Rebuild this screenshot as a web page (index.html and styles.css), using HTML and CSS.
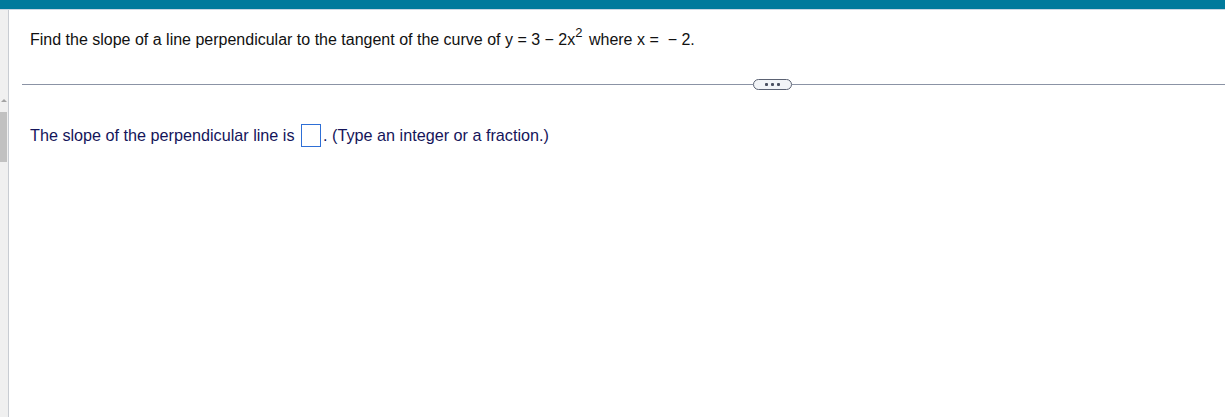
FILE: index.html
```html
<!DOCTYPE html>
<html>
<head>
<meta charset="utf-8">
<link rel="stylesheet" href="styles.css">
</head>
<body>
<div class="topbar"></div>
<div class="main">
  <div class="side">
    <div class="arrow"></div>
    <div class="thumb"></div>
  </div>
  <div class="content">
    <p class="question">Find the slope of a line perpendicular to the tangent of the curve of y = 3 − 2x<sup>2</sup> where x =  − 2.</p>
    <div class="divider">
      <div class="rule"></div>
      <div class="pill"><span></span><span></span><span></span></div>
      <div class="rule"></div>
    </div>
    <p class="answer">The slope of the perpendicular line is <span class="box"></span>. (Type an integer or a fraction.)</p>
  </div>
</div>
</body>
</html>
```
FILE: styles.css
```css
html, body {
  margin: 0;
  padding: 0;
  height: 100%;
  background: #ffffff;
  font-family: "Liberation Sans", Arial, sans-serif;
}
body {
  display: flex;
  flex-direction: column;
  overflow: hidden;
}
.topbar {
  height: 9px;
  background: #007a9c;
  border-bottom: 1px solid #c9d6e3;
  flex: none;
}
.main {
  flex: 1;
  display: flex;
}
.side {
  width: 8px;
  background: #f0f0f0;
  border-right: 1px solid #c8ccd2;
  flex: none;
  display: flex;
  flex-direction: column;
  padding-top: 89px;
}
.arrow {
  width: 0;
  height: 0;
  border-left: 3px solid transparent;
  border-right: 3px solid transparent;
  border-bottom: 3px solid #a3a3a3;
  margin-left: 1px;
}
.thumb {
  margin-top: 10px;
  height: 50px;
  width: 7px;
  background: #c1c1c1;
}
.content {
  flex: 1;
  padding-left: 13px;
}
.question {
  margin: 0;
  padding: 21px 0 0 8px;
  font-size: 16px;
  line-height: 18px;
  color: #111;
  white-space: pre;
}
.question sup {
  font-size: 13px;
  line-height: 0;
  vertical-align: 8px;
  margin-right: 2px;
}
.divider {
  display: flex;
  align-items: center;
  margin-top: 30px;
  height: 11px;
}
.rule {
  flex: 1;
  height: 1px;
  background: #8b93a5;
}
.rule:first-child {
  flex: none;
  width: 731px;
}
.pill {
  width: 37px;
  height: 9px;
  border: 1px solid #5b6273;
  border-radius: 6px;
  background: #f2f4f7;
  display: flex;
  align-items: center;
  justify-content: center;
  gap: 3px;
}
.pill span {
  width: 3px;
  height: 3px;
  background: #4a5060;
  border-radius: 1px;
}
.answer {
  margin: 0;
  padding: 33px 0 0 8px;
  font-size: 16.2px;
  line-height: 24px;
  color: #15155a;
  display: flex;
  align-items: center;
  white-space: pre;
}
.box {
  display: inline-block;
  width: 18px;
  height: 21px;
  border: 1px solid #2e6fd6;
  margin: 0 2px 0 2px;
}
```
